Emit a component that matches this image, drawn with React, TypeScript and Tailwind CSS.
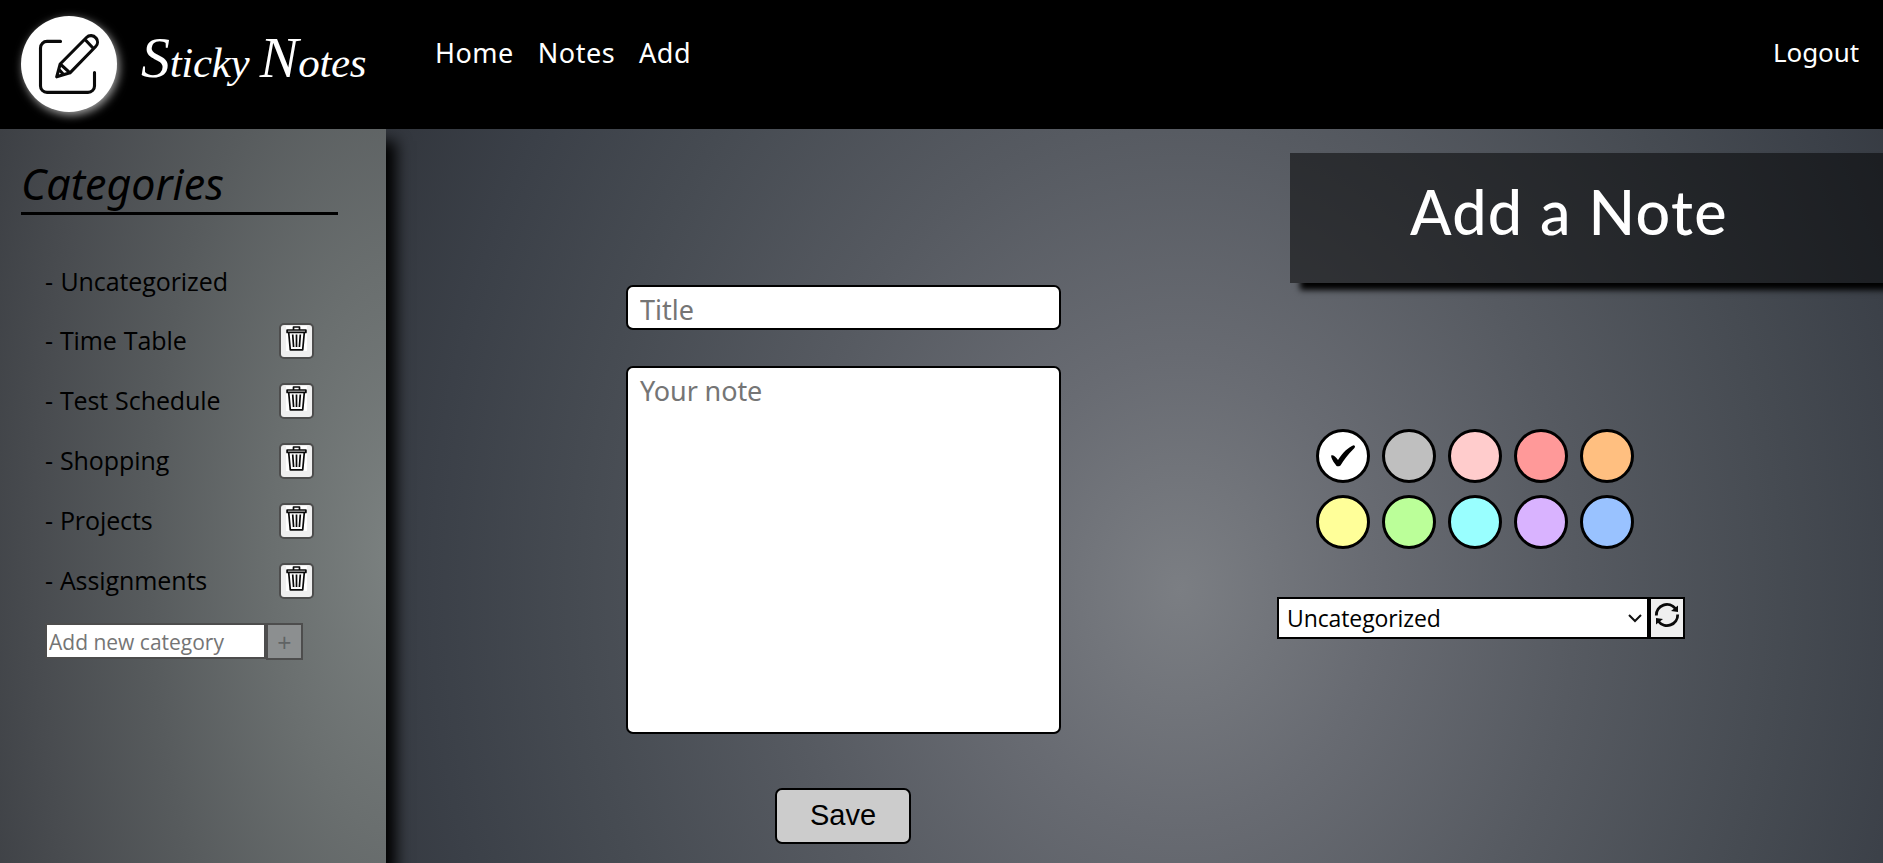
import React from "react";

const categories = ["Time Table", "Test Schedule", "Shopping", "Projects", "Assignments"];

const swatches = [
  "bg-white",
  "bg-[#bfbfbf]",
  "bg-[#ffcccc]",
  "bg-[#ff9999]",
  "bg-[#ffbf80]",
  "bg-[#ffff99]",
  "bg-[#bbff99]",
  "bg-[#99ffff]",
  "bg-[#d9b3ff]",
  "bg-[#99c2ff]",
];

function Logo() {
  return (
    <div className="h-24 w-24 shrink-0 rounded-full bg-white shadow-[2px_3px_10px_rgba(255,255,255,0.65)]">
      <svg viewBox="21 16 96 96" className="h-24 w-24" fill="none" stroke="#0a0a0a" strokeWidth="3.1" strokeLinecap="round" strokeLinejoin="round">
        <path d="M60.500 41.400H47a6.500 6.500 0 0 0-6.500 6.500v38a6.500 6.500 0 0 0 6.500 6.500h41a6.500 6.500 0 0 0 6.500-6.500V72.500" />
        <path d="M56.700 76.800 60.200 64 86.500 37.500a6.300 6.300 0 0 1 9.400.4 6.300 6.300 0 0 1-.2 8.600L70 72.800zM60.200 64l9.800 8.800M85 39.500l8 8.500M59.500 70l4 4.500" />
      </svg>
    </div>
  );
}

function Trash() {
  return (
    <svg viewBox="0 0 21 25" className="h-[25px] w-[21px] bg-white" fill="none" stroke="#0a0a0a" strokeWidth="1.7" strokeLinejoin="round">
      <path d="M7.500 3.500V1h6v2.500M1.100 4h18.800v2.400H1.100zM2.700 6.500 4.300 23.800h12.400L18.300 6.500M6.700 8.500l.9 12.500M10.500 8.500V21M14.300 8.500 13.400 21" />
    </svg>
  );
}

function Refresh() {
  return (
    <svg viewBox="0 0 26 26" className="h-[26px] w-[26px]" fill="none" stroke="#0a0a0a" strokeWidth="2.800">
      <path d="M2.300 13.500A10.700 10.700 0 0 1 21.500 6.700M23.700 12.500A10.700 10.700 0 0 1 4.500 19.300" />
      <path d="M24 3.500v6.500l-7-1zM2 22.500V16l7 1z" fill="#0a0a0a" stroke="none" />
    </svg>
  );
}

function Header() {
  return (
    <header className="flex h-[129px] items-start bg-black pl-[21px] pr-6 pt-4 text-white">
      <Logo />
      <div className="ml-6 mt-[13px] w-[294px] whitespace-nowrap font-['Liberation_Serif',cursive] text-[43px] italic leading-[60px] tracking-[-0.3px]">
        <span className="text-[58px] leading-none">S</span>ticky <span className="text-[58px] leading-none">N</span>otes
      </div>
      <nav className="mt-[17px] flex flex-1 gap-6 font-['Noto_Sans',sans-serif] text-[27px] leading-10 tracking-[0.5px]">
        <a>Home</a>
        <a>Notes</a>
        <a>Add</a>
        <a className="-mt-px ml-auto text-[26px] tracking-[-0.1px]">Logout</a>
      </nav>
    </header>
  );
}

function Sidebar() {
  return (
    <aside className="relative z-10 h-[734px] w-[386px] shrink-0 bg-[radial-gradient(ellipse_460px_1000px_at_104%_58%,#7c8281_0%,#6a6f6f_28%,#575b5d_55%,#484b4f_80%,#3b3e43_100%)] pl-[21px] font-['Open_Sans',sans-serif] text-black shadow-[10px_12px_14px_#000]">
      <h2 className="mt-[26px] h-[60px] w-[317px] border-b-[3px] border-black pt-px font-['Noto_Sans',sans-serif] text-[43px] italic leading-[56px]">Categories</h2>
      <ul className="ml-6 mt-[37px] text-[25px] tracking-[-0.08px]">
        <li className="h-[59px] leading-[59px] [word-spacing:1px]">- Uncategorized</li>
        {categories.map((name) => (
          <li key={name} className="flex h-[60px] w-[269px] items-center justify-between">
            <span className="pb-px [word-spacing:0.5px]">{`- ${name}`}</span>
            <button className="flex h-9 w-[35px] justify-center rounded-[5px] border-2 border-[#4d4d4d] bg-[#efefef] pt-px">
              <Trash />
            </button>
          </li>
        ))}
      </ul>
      <div className="ml-6 mt-[12px] flex items-start text-[21px]">
        <input placeholder="Add new category" className="h-9 w-[221px] border-2 border-[#4d4d4d] bg-white px-[2px] pt-[2px] placeholder:text-[#757575]" />
        <button className="h-[37px] w-[37px] border-2 border-[#4d4d4d] bg-[#8c8f90] text-[25px] leading-7 text-[#606364]">+</button>
      </div>
    </aside>
  );
}

export default function App() {
  return (
    <div className="h-[863px] w-full overflow-hidden">
      <Header />
      <main className="flex h-[734px] bg-[radial-gradient(ellipse_880px_1050px_at_1180px_460px,#7b7e83_0%,#686b72_22%,#565a61_45%,#464b52_68%,#3b4048_85%,#32363d_100%)]">
        <Sidebar />
        <section className="ml-60 flex w-[435px] shrink-0 flex-col items-center pt-[156px] font-['Noto_Sans',sans-serif] text-[27px]">
          <input placeholder="Title" className="h-[45px] w-full rounded-[7px] border-2 border-black bg-white px-3 pt-[3px] placeholder:text-[#757575]" />
          <textarea placeholder="Your note" className="mt-9 h-[368px] w-full shrink-0 resize-none rounded-[7px] border-2 border-black bg-white px-3 py-1 leading-[37px] tracking-[-0.1px] placeholder:text-[#757575]" />
          <button className="mr-px mt-[54px] h-14 w-[136px] rounded-[7px] border-2 border-black bg-[#ccc] font-['Liberation_Sans',sans-serif] text-[29px]">Save</button>
        </section>
        <section className="flex flex-1 flex-col pt-6">
          <h1 className="ml-[229px] h-[130px] bg-black/50 pl-[120px] font-['Lato',sans-serif] text-[61px] font-medium leading-[118px] tracking-[1.3px] text-white shadow-[10px_7px_6px_#000]">Add a Note</h1>
          <div className="ml-[255px] mt-[146px] grid w-max grid-cols-5 gap-3">
            {swatches.map((color, i) => (
              <button key={color} className={`flex h-[54px] w-[54px] items-center justify-center rounded-full border-[3px] border-black ${color}`}>
                {i === 0 && (
                  <svg viewBox="0 0 24 22" className="h-[22px] w-6">
                    <path d="M.2 10.500C1.500 9.500 4.500 11 7 15 12 7 17 3 22.500.3 25 .5 24 3 22 4.500 17 9 13 15 9.500 20.500 7 22 5.500 21.500 4.500 19.500 1 15 0 12 .2 10.500z" />
                  </svg>
                )}
              </button>
            ))}
          </div>
          <div className="ml-[216px] mt-12 flex h-[42px] w-[408px]">
            <div className="flex w-[372px] items-center justify-between border-2 border-black bg-white pl-2 pr-[5px] pt-px font-['Open_Sans',sans-serif] text-[23px] tracking-[-0.1px]">
              Uncategorized
              <svg viewBox="0 0 14 9" className="h-[9px] w-[14px]" fill="none" stroke="#111" strokeWidth="2">
                <path d="m1 1 6 6 6-6" />
              </svg>
            </div>
            <button className="flex w-9 justify-center border-2 border-black bg-[#efefef] pt-[3px]">
              <Refresh />
            </button>
          </div>
        </section>
      </main>
    </div>
  );
}
